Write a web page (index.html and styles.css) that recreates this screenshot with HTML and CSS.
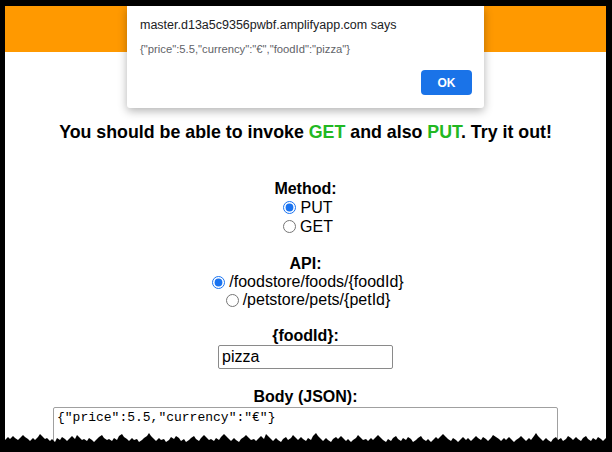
FILE: index.html
```html
<!DOCTYPE html>
<html lang="en">
<head>
<meta charset="utf-8">
<title>API tester</title>
<link rel="stylesheet" href="styles.css">
</head>
<body>
<div class="frame">
  <div class="page">
    <div class="topbar"></div>
    <main class="main">
      <h1 class="title">You should be able to invoke <span class="ok">GET</span> and also <span class="ok">PUT</span>. Try it out!</h1>

      <div class="group group-method">
        <div class="label">Method:</div>
        <label class="row"><input type="radio" name="method" checked><span>PUT</span></label>
        <label class="row"><input type="radio" name="method"><span>GET</span></label>
      </div>

      <div class="group group-api">
        <div class="label">API:</div>
        <label class="row"><input type="radio" name="api" checked><span>/foodstore/foods/{foodId}</span></label>
        <label class="row"><input type="radio" name="api"><span>/petstore/pets/{petId}</span></label>
      </div>

      <div class="group group-id">
        <div class="label">{foodId}:</div>
        <input class="field" type="text" value="pizza">
      </div>

      <div class="group group-body">
        <div class="label">Body (JSON):</div>
        <textarea class="body-field">{"price":5.5,"currency":"€"}</textarea>
      </div>
    </main>

    <div class="dialog">
      <div class="dialog-title">master.d13a5c9356pwbf.amplifyapp.com says</div>
      <div class="dialog-msg">{"price":5.5,"currency":"€","foodId":"pizza"}</div>
      <div class="dialog-actions"><button class="dialog-ok">OK</button></div>
    </div>
  </div>

  <svg class="torn" width="612" height="22" viewBox="0 0 612 22" preserveAspectRatio="none" aria-hidden="true">
    <polygon fill="#000" points="0,22 0,9 3,8 5,10 8,7 10,9 13,6 15,8 18,10 20,8 23,5 25,7 28,9 30,11 33,8 35,10 38,7 40,4 42,6 45,9 47,8 50,11 52,9 55,12 57,8 60,10 62,7 65,9 67,11 70,8 72,6 75,9 77,5 79,7 82,10 84,9 87,11 89,8 92,10 94,12 97,9 99,7 102,5 104,8 107,10 109,9 112,11 114,8 117,10 119,6 122,4 124,7 127,9 129,11 132,8 134,10 137,9 139,12 142,10 144,8 147,6 149,3 151,6 154,9 156,11 159,8 161,10 164,9 166,12 169,10 171,7 174,9 176,6 179,8 181,11 184,9 186,12 189,10 191,8 194,6 196,9 199,11 201,8 204,5 206,7 209,10 211,9 214,11 216,8 219,10 221,7 224,4 226,6 229,9 231,11 234,8 236,10 239,12 241,9 244,7 246,5 249,8 251,10 254,9 256,11 259,8 261,6 264,9 266,4 268,6 271,9 273,11 276,8 278,10 281,12 283,9 286,7 288,10 291,8 293,5 296,8 298,10 301,7 303,9 306,11 308,8 311,10 313,6 316,3 318,6 321,9 323,11 326,8 328,10 331,12 333,9 336,7 338,9 341,6 343,8 346,11 348,9 351,12 353,10 356,8 358,5 361,8 363,10 366,9 368,11 371,8 373,10 376,7 378,5 381,8 383,10 386,12 388,9 391,11 393,8 396,6 398,9 401,11 403,8 406,10 408,7 411,9 413,12 416,10 418,8 421,6 423,9 426,11 428,9 431,12 433,10 436,7 438,9 441,6 443,4 446,7 448,9 451,11 453,8 456,10 458,12 461,9 463,7 466,10 468,8 471,11 473,9 476,6 478,8 481,10 483,7 486,9 488,11 491,8 493,5 496,7 499,9 501,11 504,8 506,10 509,7 511,9 514,12 516,10 519,8 521,6 524,9 526,11 529,8 531,10 534,6 536,3 538,6 541,9 543,11 546,8 548,10 551,12 553,9 556,7 558,10 561,8 563,11 566,9 568,6 571,8 573,10 576,7 578,9 581,11 583,8 586,6 588,9 591,11 593,8 596,10 598,7 601,9 603,11 606,8 609,10 612,9 612,22"/>
  </svg>
</div>
</body>
</html>
```

FILE: styles.css
```css
* { box-sizing: border-box; }

html, body {
  margin: 0;
  padding: 0;
  background: #000;
}

.frame {
  position: relative;
  width: 612px;
  height: 452px;
  background: #000;
  padding: 6px 6px 0 5px;
  overflow: hidden;
}

.page {
  position: relative;
  height: 100%;
  background: #fff;
  overflow: hidden;
  font-family: "Liberation Sans", Arial, sans-serif;
  color: #000;
}

.topbar {
  height: 46px;
  background: #ff9900;
}

.main {
  display: flex;
  flex-direction: column;
  align-items: center;
}

.title {
  margin: 69px 0 0;
  font-size: 17.8px;
  line-height: 22px;
  font-weight: bold;
  white-space: nowrap;
}

.ok { color: #22b822; }

.group {
  display: flex;
  flex-direction: column;
  align-items: center;
}

.group-method { margin-top: 36px; }
.group-api { margin-top: 18px; }
.group-id { margin-top: 18px; }
.group-body { margin-top: 19px; }

.label {
  font-size: 16px;
  font-weight: bold;
  line-height: 19px;
  height: 19px;
}

.group-id .label,
.group-body .label { height: 18px; line-height: 18px; }

.row {
  display: flex;
  align-items: center;
  height: 19px;
  font-size: 16px;
  line-height: 19px;
}

.group-api .row { height: 18px; line-height: 18px; }

.row input {
  width: 13px;
  height: 13px;
  margin: 0 4px 0 5px;
  accent-color: #1a73f0;
}

.field {
  width: 175px;
  height: 24px;
  margin: 0;
  padding: 1px 3px;
  border: 1px solid #8a8a8a;
  border-radius: 2px;
  font-family: "Liberation Sans", Arial, sans-serif;
  font-size: 16px;
  color: #000;
}

.group-body .body-field {
  margin-top: 1px;
}

.body-field {
  display: block;
  width: 505px;
  height: 60px;
  padding: 2px 3px;
  border: 1px solid #a0a0a0;
  border-radius: 2px;
  font-family: "Liberation Mono", "Courier New", monospace;
  font-size: 13px;
  line-height: 15px;
  color: #000;
  resize: none;
}

.dialog {
  position: absolute;
  top: 0;
  left: 122px;
  width: 357px;
  height: 102px;
  background: #fff;
  border-radius: 0 0 3px 3px;
  box-shadow: 0 3px 10px rgba(0, 0, 0, 0.3);
  padding: 11px 12px 0 13px;
}

.dialog-title {
  font-size: 12.5px;
  line-height: 16px;
  color: #202124;
}

.dialog-msg {
  margin-top: 9px;
  font-size: 11.25px;
  line-height: 14px;
  color: #5f6368;
}

.dialog-actions {
  display: flex;
  justify-content: flex-end;
  margin-top: 14px;
}

.dialog-ok {
  width: 51px;
  height: 25px;
  border: 0;
  border-radius: 4px;
  background: #1a73e8;
  color: #fff;
  font-family: "Liberation Sans", Arial, sans-serif;
  font-size: 12px;
  font-weight: bold;
  padding: 0;
}

.torn {
  position: absolute;
  left: 0;
  bottom: 0;
  display: block;
}
```
